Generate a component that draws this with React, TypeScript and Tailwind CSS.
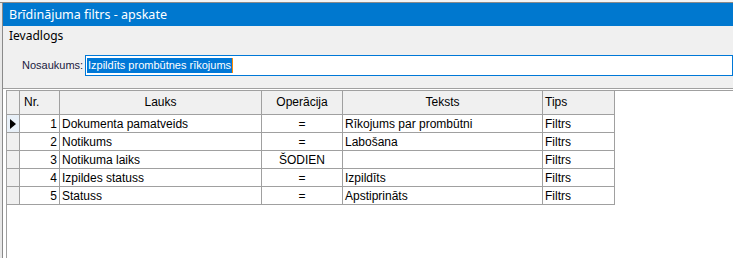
import React from "react";

const rows = [
  { nr: 1, lauks: "Dokumenta pamatveids", op: "=", teksts: "Rīkojums par prombūtni", tips: "Filtrs" },
  { nr: 2, lauks: "Notikums", op: "=", teksts: "Labošana", tips: "Filtrs" },
  { nr: 3, lauks: "Notikuma laiks", op: "ŠODIEN", teksts: "", tips: "Filtrs" },
  { nr: 4, lauks: "Izpildes statuss", op: "=", teksts: "Izpildīts", tips: "Filtrs" },
  { nr: 5, lauks: "Statuss", op: "=", teksts: "Apstiprināts", tips: "Filtrs" },
];

const cols = "grid grid-cols-[13px_40px_202px_81px_200px_72px]";
const cell = "border-r border-b border-[#a0a0a0] px-[2px] truncate";

const App: React.FC = () => {
  return (
    <div className="w-[733px] h-[258px] overflow-hidden flex flex-col bg-[#f0f0f0] font-['Noto_Sans',sans-serif]">
      {/* window behind, top edge */}
      <div className="h-[3px] shrink-0 bg-[#f4f4f4] border-b border-[#8a8a8a]" />

      <div className="flex flex-1 min-h-0">
        <div className="w-[2px] bg-[#e8e8e8]" />
        <div className="flex-1 flex flex-col border-l border-[#8a8a8a] min-w-0">
          {/* title bar */}
          <div className="h-[23px] shrink-0 bg-[#0078cf] text-white text-[12.5px] leading-[23px] pl-[6px]">
            Brīdinājuma filtrs - apskate
          </div>

          {/* header panel */}
          <div className="h-[62px] shrink-0 bg-[#f0f0f0] text-[12px] text-black">
            <div className="h-[18px] leading-[18px] mt-[1px] pl-[6px]">Ievadlogs</div>
            <div className="flex items-center mt-[10px] h-[21px] font-['Liberation_Sans',sans-serif] text-[11px]">
              <span className="ml-[19px] w-[63px] shrink-0 text-[#1a1a40] whitespace-nowrap">Nosaukums:</span>
              <div className="flex-1 h-[21px] border border-[#0078d7] bg-white flex items-center pl-[1px]">
                <span className="bg-[#0078d7] text-white leading-[15px] px-[1px] whitespace-nowrap">
                  Izpildīts prombūtnes rīkojums
                </span>
                <span className="w-[1px] h-[15px] bg-[#ff8a00]" />
              </div>
            </div>
          </div>

          {/* grid panel */}
          <div className="flex-1 min-h-0 border-t border-[#a0a0a0] bg-white pt-[1px] pl-[3px]">
            <div className="h-full border-t border-l border-[#a0a0a0] bg-white font-['Liberation_Sans',sans-serif] text-[12px] text-black">
              <div className={`${cols} h-[24px] leading-[23px] bg-[#f0f0f0] w-[608px]`}>
                <div className={cell} />
                <div className={`${cell} pl-[4px]`}>Nr.</div>
                <div className={`${cell} text-center`}>Lauks</div>
                <div className={`${cell} text-center`}>Operācija</div>
                <div className={`${cell} text-center`}>Teksts</div>
                <div className={cell}>Tips</div>
              </div>
              {rows.map((r, i) => (
                <div key={r.nr} className={`${cols} h-[18px] leading-[18px] w-[608px]`}>
                  <div
                    className={`border-r border-b border-[#a0a0a0] flex items-center justify-center ${
                      i === 0 ? "bg-[#e8f0f8]" : "bg-[#f0f0f0]"
                    }`}
                  >
                    {i === 0 && (
                      <svg width="6" height="10" viewBox="0 0 6 10">
                        <path d="M0 0 L6 5 L0 10 Z" fill="#000" />
                      </svg>
                    )}
                  </div>
                  <div className={`${cell} text-right`}>{r.nr}</div>
                  <div className={cell}>{r.lauks}</div>
                  <div className={`${cell} text-center`}>{r.op}</div>
                  <div className={cell}>{r.teksts}</div>
                  <div className={cell}>{r.tips}</div>
                </div>
              ))}
            </div>
          </div>
        </div>
      </div>
    </div>
  );
};

export default App;
